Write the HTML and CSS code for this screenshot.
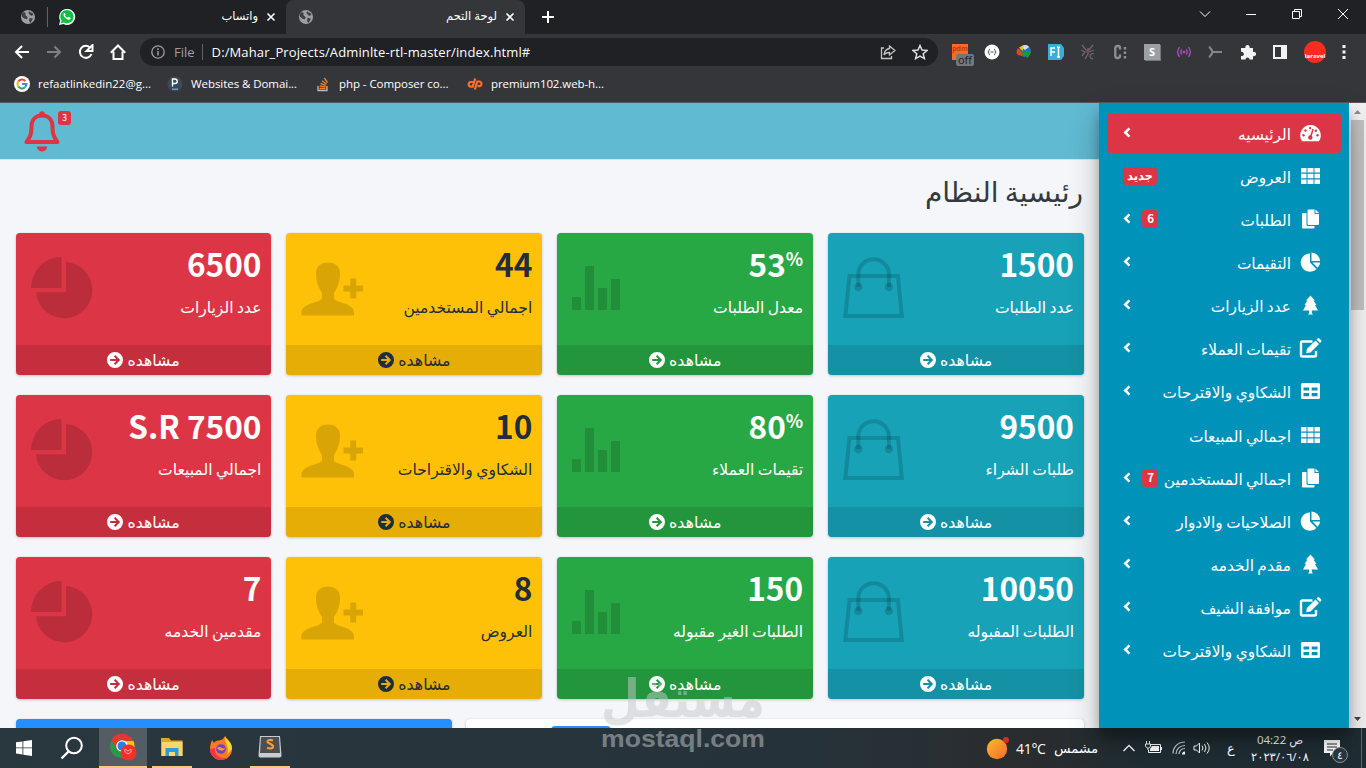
FILE: index.html
```
<!DOCTYPE html>
<html lang="ar" dir="rtl">
<head>
  <meta charset="UTF-8" />
  <meta name="viewport" content="width=device-width, initial-scale=1.0" />
  <title>لوحة التحم</title>
  <link rel="stylesheet" href="styles.css">
</head>
<body>
  <!-- Shared icons -->
  <svg class="defs" width="0" height="0">
    <symbol id="globe" viewBox="0 0 16 16"><circle cx="8" cy="8" r="7" fill="#9aa0a6"/><path d="M3 3.500c2-.5 3 .5 2.500 2S8 7 7.500 9 5 10 3.500 9 1 6 3 3.500zM9 2c1 2 3 1 4.500 3L12 7 10 6 8.500 4zM9.500 9l3.500 0.500-2.500 4.500-1.500-2z" fill="#3c4043"/></symbol>
    <symbol id="x" viewBox="0 0 10 10"><path d="M1.500 1.500l7 7M8.500 1.500l-7 7" stroke="#fff" stroke-width="1.600"/></symbol>
    <symbol id="arrow" viewBox="0 0 16 16"><path fill-rule="evenodd" d="M8 0a8 8 0 1 0 0 16A8 8 0 0 0 8 0zM6.900 4.500l1.400-1.400L13.200 8l-4.900 4.900-1.400-1.400L9.300 9H3.200V7h6.100z" fill="currentColor"/></symbol>
    <symbol id="chev" viewBox="0 0 8 11"><path d="M6.500 1.300L2.200 5.500l4.300 4.200" fill="none" stroke="#fff" stroke-width="2.500"/></symbol>
    <symbol id="bag" viewBox="0 0 62 62"><path d="M6.500 19h48.500l3.800 40H2.300z" fill="none" stroke="currentColor" stroke-width="4"/><path d="M15.300 30V17.500a15.300 15.300 0 0 1 30.600 0V30" fill="none" stroke="currentColor" stroke-width="4"/><circle cx="15.300" cy="30" r="4.200" fill="currentColor"/><circle cx="45.900" cy="30" r="4.200" fill="currentColor"/></symbol>
    <symbol id="bars" viewBox="0 0 62 62"><path d="M0 40h9v13H0zM13 9h9v44h-9zM26 31h9v22h-9zM39 22h9v31h-9z" fill="currentColor"/></symbol>
    <symbol id="person" viewBox="0 0 62 62"><path d="M27 5.500c7.500 0 12 4 12 11 0 8.500-2.500 14.500-6 19.500V41c0 4.500 20 5 20 14v3.500H.500V55c0-9 20.500-9.500 20.500-14v-5c-3.500-5-6-11-6-19.500 0-7 4.500-11 12-11zM49.200 21.500h6V28.500H62v6h-6.800v7h-6v-7h-6.700v-6h6.700z" fill="currentColor"/></symbol>
    <symbol id="pie" viewBox="0 0 62 62"><path d="M30.500 0v31H0A30.500 31 0 0 1 30.500 0zM35 5a28.200 28.200 0 1 1-30 30.300h30z" fill="currentColor"/></symbol>
    <symbol id="i-dash" viewBox="0 0 22 18"><path d="M11 1A10.300 10.300 0 0 0 2.600 17.200h16.800A10.300 10.300 0 0 0 11 1z" fill="#fff"/><path d="M10.800 14L13.600 5" stroke="#dc3545" stroke-width="1.500"/><g fill="#dc3545"><circle cx="10.800" cy="13.500" r="2.200"/><circle cx="4" cy="11.300" r="1.200"/><circle cx="6" cy="6.500" r="1.200"/><circle cx="10.600" cy="4.200" r="1.100"/><circle cx="16.300" cy="6.800" r="1.200"/><circle cx="18" cy="11.300" r="1.200"/></g></symbol>
    <symbol id="i-grid" viewBox="0 0 20 18"><path d="M.500 1h5.500v4.600H.500zM7 1h6v4.600H7zM14 1h5.500v4.600H14zM.500 6.700h5.500v4.600H.500zM7 6.700h6v4.600H7zM14 6.700h5.500v4.600H14zM.500 12.400h5.500V17H.500zM7 12.400h6V17H7zM14 12.400h5.500V17H14z" fill="#fff"/></symbol>
    <symbol id="i-copy" viewBox="0 0 18 20"><path d="M7 .5h6V5h4.500v10a1 1 0 0 1-1 1H7a1 1 0 0 1-1-1V1.500a1 1 0 0 1 1-1zM14 .5L17.500 4H14zM1.500 4H5v11.500A1.500 1.500 0 0 0 6.500 17H13v1.500a1 1 0 0 1-1 1H1.500a1 1 0 0 1-1-1V5a1 1 0 0 1 1-1z" fill="#fff"/></symbol>
    <symbol id="i-pie" viewBox="0 0 20 20"><path d="M9.500 1.500V10.500l6.400 6.400A9.100 9.100 0 1 1 9.500 1.500zM11 .5a9 9 0 0 1 8.500 8.500H11zM12 10.500h7.700a9 9 0 0 1-2.600 5.200z" fill="#fff"/></symbol>
    <symbol id="i-tree" viewBox="0 0 16 20"><path d="M8 .5L12.500 5.500H11L14 10h-1.500l3 5.500H9.300V18l1.200 1.500h-5L6.700 18v-2.500H.5l3-5.500H2l3-4.500H3.500z" fill="#fff"/></symbol>
    <symbol id="i-edit" viewBox="0 0 22 20"><path d="M13 3.500H3A1.500 1.500 0 0 0 1.500 5v12A1.500 1.500 0 0 0 3 18.500h12a1.500 1.500 0 0 0 1.500-1.500v-4" fill="none" stroke="#fff" stroke-width="2.400"/><path d="M16 2.500l3.500 3.500L11 14.500l-4.300.7.700-4.200zM17 1.500l1-1a1.300 1.300 0 0 1 1.800 0L21.500 2.200a1.300 1.300 0 0 1 0 1.800l-1 1z" fill="#fff"/></symbol>
    <symbol id="i-table" viewBox="0 0 20 18"><path fill-rule="evenodd" d="M2 1h16a1.500 1.500 0 0 1 1.500 1.500v13A1.500 1.500 0 0 1 18 17H2a1.500 1.500 0 0 1-1.500-1.500v-13A1.500 1.500 0 0 1 2 1zM3 5.500v3h5.700v-3zM11.200 5.500v3H17v-3zM3 11v3.300h5.700V11zM11.200 11v3.300H17V11z" fill="#fff"/></symbol>
  </svg>

  <!-- Browser window -->
  <header class="browser" dir="ltr">
    <div class="tabs">
      <div class="tab pinned"><svg width="16" height="16"><use href="#globe"/></svg></div>
      <div class="tab">
        <svg width="18" height="18" viewBox="0 0 18 18"><path d="M1 17l1.200-4.200A8 8 0 1 1 5.500 16z" fill="#fff"/><path d="M2.600 15.400l.9-2.800A6.700 6.700 0 1 1 5.800 14.600z" fill="#12c143"/><path d="M6.300 5c-1.600 1.200-.4 3.600 1.200 5s3.700 2.500 5 .8l-.2-1.200-1.900-.8-.9 1c-1.200-.4-2-1.300-2.500-2.300l.6-.9L6.900 5z" fill="#fff"/></svg>
        <span class="tab-title">واتساب</span>
        <svg width="10" height="10"><use href="#x"/></svg>
      </div>
      <div class="tab active">
        <svg width="16" height="16"><use href="#globe"/></svg>
        <span class="tab-title">لوحة التحم</span>
        <svg width="10" height="10"><use href="#x"/></svg>
      </div>
      <svg class="new-tab" width="12" height="12" viewBox="0 0 12 12"><path d="M6 0v12M0 6h12" stroke="#fff" stroke-width="2"/></svg>
      <div class="window-buttons">
        <svg width="12" height="12" viewBox="0 0 12 12"><path d="M1 3.500l5 5 5-5"/></svg>
        <svg width="12" height="12" viewBox="0 0 12 12"><path d="M1 6.500h10"/></svg>
        <svg width="12" height="12" viewBox="0 0 12 12"><path d="M1.500 3.500h7v7h-7zM3.500 3.500v-2h7v7h-2"/></svg>
        <svg width="12" height="12" viewBox="0 0 12 12"><path d="M1 1l10 10M11 1L1 11"/></svg>
      </div>
    </div>

    <div class="toolbar">
      <div class="nav-buttons">
        <svg width="16" height="16" viewBox="0 0 16 16"><path d="M15 8H2M8 2L2 8l6 6"/></svg>
        <svg class="dim" width="16" height="16" viewBox="0 0 16 16"><path d="M1 8h13M8.500 2.500L14 8l-5.500 5.500"/></svg>
        <svg width="16" height="16" viewBox="0 0 16 16"><path d="M13.500 10A6 6 0 1 1 12.500 4"/><path d="M14.500 1v6h-6z" fill="#fff" stroke="none"/></svg>
        <svg width="16" height="16" viewBox="0 0 16 16"><path d="M.800 8.700L8 1.500l7.200 7.200M3.500 7.500V15h9V7.500"/></svg>
      </div>
      <div class="address">
        <svg width="14" height="14" viewBox="0 0 14 14"><circle cx="7" cy="7" r="6.200" fill="none" stroke="#9aa0a6" stroke-width="1.300"/><path d="M7 6v4.500M7 3.300V5" stroke="#9aa0a6" stroke-width="1.500"/></svg>
        <span class="scheme">File</span>
        <span class="url">D:/Mahar_Projects/Adminlte-rtl-master/index.html#</span>
        <svg width="16" height="16" viewBox="0 0 16 16"><path d="M4 4H1.500v10.500h10V12M9.500 2l5.500 4.500L9.500 11V8.500C7 8.500 5 9.500 4 11c.3-3.500 2.500-6 5.500-6.500z" fill="none" stroke="#c4c7c5" stroke-width="1.300"/></svg>
        <svg width="16" height="16" viewBox="0 0 16 16"><path d="M8 1.500l2 4.600 5 .4-3.800 3.200 1.200 4.900L8 12l-4.400 2.600 1.200-4.900L1 6.500l5-.4z" fill="none" stroke="#dadce0" stroke-width="1.500"/></svg>
      </div>
      <div class="extensions">
        <span class="ext ext-pdf">pdm<b>off</b></span>
        <svg width="16" height="16" viewBox="0 0 16 16"><circle cx="8" cy="8" r="7.500" fill="#fff"/><path d="M6 5C4.500 5 5.500 8 3.800 8 5.500 8 4.500 11 6 11M10 5c1.500 0 .5 3 2.200 3-1.700 0-.7 3-2.200 3M6.500 8h3" fill="none" stroke="#444"/></svg>
        <svg width="16" height="16" viewBox="0 0 16 16"><circle cx="9" cy="7" r="6" fill="#276fc0"/><path d="M5 3c3-3 7-2 8 0L9 6z" fill="#d8dfe4"/><path d="M3 3.500L8 1 6.500 7z" fill="#e8c81c"/><path d="M2 4c-4 6 1 9 6 7L4.500 7z" fill="#d84828"/><path d="M6 8l4-1 5 1-3.500 6.500L10 12l-3 0z" fill="#159b3d"/></svg>
        <svg width="16" height="16" viewBox="0 0 16 16"><path d="M0 0h13l3 4v8l-3 4H0z" fill="#3baed8"/><path d="M3 12V4h4M3 8h4M9 3c1 0 1.500.500 1.500 1.500v7c0 1-.5 1.500-1.500 1.500M12 3c-1 0-1.500.500-1.500 1.500v7c0 1 .5 1.500 1.500 1.500" fill="none" stroke="#fff" stroke-width="1.400"/></svg>
        <svg width="16" height="16" viewBox="0 0 16 16"><path d="M2 1l4 5M13 1L9 6M1 6l4 2-3 4M14 6L9 8M8 4v6l-3 5M14 10c-4-2-6 4-1 5" fill="none" stroke="#67696d" stroke-width="1.300"/><circle cx="7.500" cy="7" r="1.500" fill="#a04040"/></svg>
        <svg width="16" height="16" viewBox="0 0 16 16"><path d="M8 5.500V3.700A1.800 1.800 0 0 0 6.200 2H5.500a2.200 2.200 0 0 0-2.200 2.200v7.600A2.200 2.200 0 0 0 5.500 14h.7A1.800 1.800 0 0 0 8 12.300V10.500" fill="none" stroke="#8b8f94" stroke-width="2.300"/><path d="M13 3v12" stroke="#8b8f94" stroke-width="2.500" stroke-dasharray="2.500 2"/></svg>
        <span class="ext ext-s">S</span>
        <svg width="16" height="16" viewBox="0 0 16 16"><path d="M3.500 3Q0 8 3.500 13M12.500 3Q16 8 12.500 13M5.800 5.500Q4 8 5.800 10.500M10.200 5.500Q12 8 10.200 10.500" fill="none" stroke="#b34fc5" stroke-width="1.300"/><circle cx="8" cy="8" r="1.200" fill="#e040c0"/></svg>
        <svg width="16" height="16" viewBox="0 0 16 16"><path d="M1.500 2.500C2 5 4 5 4.500 8 4 11 2 11 1.500 13.500M4.500 8H14" fill="none" stroke="#80868b" stroke-width="2.200"/></svg>
        <svg width="16" height="16" viewBox="0 0 16 16"><path d="M1 4h4.500a2.200 2.200 0 1 1 4 0H13v4a2.200 2.200 0 1 1 0 4v3.500H9.500a2 2 0 1 0-4 0H1V12a2.200 2.200 0 1 0 0-4.200z" fill="#f1f3f4"/></svg>
        <svg width="16" height="16" viewBox="0 0 16 16"><path fill-rule="evenodd" d="M1 1h14v14H1zM3 3v10h6V3z" fill="#f1f3f4"/></svg>
        <span class="avatar">laravel</span>
        <svg width="4" height="16" viewBox="0 0 4 16"><path d="M.500 1h3v3h-3zM.500 6.500h3v3h-3zM.500 12h3v3h-3z" fill="#f1f3f4"/></svg>
      </div>
    </div>

    <div class="bookmarks">
      <a class="bm"><svg width="16" height="16" viewBox="0 0 16 16"><circle cx="8" cy="8" r="8" fill="#fff"/><g fill="none" stroke-width="2"><path d="M4.300 5.500A4.500 4.500 0 0 1 11.300 5" stroke="#ea4335"/><path d="M4.300 5.500a4.500 4.500 0 0 0 0 5" stroke="#fbbc05"/><path d="M4.300 10.500a4.500 4.500 0 0 0 6.500 1" stroke="#34a853"/><path d="M10.800 11.500A4.500 4.500 0 0 0 12.500 8H8" stroke="#4285f4"/></g></svg><span>refaatlinkedin22@g...</span></a>
      <a class="bm"><svg width="16" height="16" viewBox="0 0 16 16"><circle cx="8" cy="8" r="7.500" fill="#3a4a58"/><path d="M5.500 10.500V3H8a2.200 2.200 0 0 1 0 4.500H5.500" fill="none" stroke="#fff" stroke-width="1.400"/><path d="M5 13.200h6" stroke="#5ab4e8" stroke-width="1.300"/></svg><span>Websites &amp; Domai...</span></a>
      <a class="bm"><svg width="16" height="16" viewBox="0 0 16 16"><path d="M3 10v4.500h9V10" fill="none" stroke="#bcbbbb" stroke-width="1.300"/><path d="M4.500 12.500h6M4.700 10l5.900.8M5.500 7.300l5.400 2M7 4.700l4.500 3.300M9.300 2l3.200 4.500" stroke="#f48024" stroke-width="1.300"/></svg><span>php - Composer co...</span></a>
      <a class="bm"><svg width="16" height="16" viewBox="0 0 16 16"><path d="M6.500 6H4a2.300 2.300 0 0 0 0 4.600h1.700L8.200 2.500M7.800 13.500L10.300 5.500h1.900a2.300 2.300 0 0 1 0 4.600H10.500" fill="none" stroke="#ff6c2c" stroke-width="2.200"/></svg><span>premium102.web-h...</span></a>
    </div>
  </header>

  <!-- Dashboard -->
  <div class="wrapper">
    <aside class="sidebar">
      <ul class="nav">
        <li class="active"><svg class="ico" height="18"><use href="#i-dash"/></svg><p>الرئيسيه</p><svg class="chev" width="8" height="11"><use href="#chev"/></svg></li>
        <li><svg class="ico" height="18"><use href="#i-grid"/></svg><p>العروض</p><span class="badge">جديد</span></li>
        <li><svg class="ico" height="20"><use href="#i-copy"/></svg><p>الطلبات</p><span class="badge">6</span><svg class="chev" width="8" height="11"><use href="#chev"/></svg></li>
        <li><svg class="ico" height="20"><use href="#i-pie"/></svg><p>التقيمات</p><svg class="chev" width="8" height="11"><use href="#chev"/></svg></li>
        <li><svg class="ico" height="20"><use href="#i-tree"/></svg><p>عدد الزيارات</p><svg class="chev" width="8" height="11"><use href="#chev"/></svg></li>
        <li><svg class="ico" height="20"><use href="#i-edit"/></svg><p>تقيمات العملاء</p><svg class="chev" width="8" height="11"><use href="#chev"/></svg></li>
        <li><svg class="ico" height="18"><use href="#i-table"/></svg><p>الشكاوي والاقترحات</p><svg class="chev" width="8" height="11"><use href="#chev"/></svg></li>
        <li><svg class="ico" height="18"><use href="#i-grid"/></svg><p>اجمالي المبيعات</p></li>
        <li><svg class="ico" height="20"><use href="#i-copy"/></svg><p>اجمالي المستخدمين</p><span class="badge">7</span><svg class="chev" width="8" height="11"><use href="#chev"/></svg></li>
        <li><svg class="ico" height="20"><use href="#i-pie"/></svg><p>الصلاحيات والادوار</p><svg class="chev" width="8" height="11"><use href="#chev"/></svg></li>
        <li><svg class="ico" height="20"><use href="#i-tree"/></svg><p>مقدم الخدمه</p><svg class="chev" width="8" height="11"><use href="#chev"/></svg></li>
        <li><svg class="ico" height="20"><use href="#i-edit"/></svg><p>موافقة الشيف</p><svg class="chev" width="8" height="11"><use href="#chev"/></svg></li>
        <li><svg class="ico" height="18"><use href="#i-table"/></svg><p>الشكاوي والاقترحات</p><svg class="chev" width="8" height="11"><use href="#chev"/></svg></li>
      </ul>
    </aside>

    <main class="content">
      <nav class="topbar">
        <div class="bell">
          <svg width="36" height="41" viewBox="0 0 36 41"><path d="M18 4.500c-7 0-10.500 5-10.500 11 0 9-2 11-5 15.500h31c-3-4.500-5-6.500-5-15.500 0-6-3.500-11-10.500-11z" fill="none" stroke="#dc3545" stroke-width="4" stroke-linejoin="round"/><circle cx="18" cy="3" r="2.800" fill="#dc3545"/><path d="M12.800 35.500h10.400a5.200 5 0 0 1-10.400 0z" fill="#dc3545"/></svg>
          <span class="count">3</span>
        </div>
      </nav>
      <h1>رئيسية النظام</h1>
      <div class="boxes">
        <div class="box info"><div class="inner"><div><h3>1500</h3><p>عدد الطلبات</p></div><svg width="62" height="62"><use href="#bag"/></svg></div><a class="more"><span>مشاهده</span> <svg width="16" height="16"><use href="#arrow"/></svg></a></div>
        <div class="box success"><div class="inner"><div><h3 dir="ltr">53<sup>%</sup></h3><p>معدل الطلبات</p></div><svg width="62" height="62"><use href="#bars"/></svg></div><a class="more"><span>مشاهده</span> <svg width="16" height="16"><use href="#arrow"/></svg></a></div>
        <div class="box warning"><div class="inner"><div><h3>44</h3><p>اجمالي المستخدمين</p></div><svg width="62" height="62"><use href="#person"/></svg></div><a class="more"><span>مشاهده</span> <svg width="16" height="16"><use href="#arrow"/></svg></a></div>
        <div class="box danger"><div class="inner"><div><h3>6500</h3><p>عدد الزيارات</p></div><svg width="62" height="62"><use href="#pie"/></svg></div><a class="more"><span>مشاهده</span> <svg width="16" height="16"><use href="#arrow"/></svg></a></div>

        <div class="box info"><div class="inner"><div><h3>9500</h3><p>طلبات الشراء</p></div><svg width="62" height="62"><use href="#bag"/></svg></div><a class="more"><span>مشاهده</span> <svg width="16" height="16"><use href="#arrow"/></svg></a></div>
        <div class="box success"><div class="inner"><div><h3 dir="ltr">80<sup>%</sup></h3><p>تقيمات العملاء</p></div><svg width="62" height="62"><use href="#bars"/></svg></div><a class="more"><span>مشاهده</span> <svg width="16" height="16"><use href="#arrow"/></svg></a></div>
        <div class="box warning"><div class="inner"><div><h3>10</h3><p>الشكاوي والاقتراحات</p></div><svg width="62" height="62"><use href="#person"/></svg></div><a class="more"><span>مشاهده</span> <svg width="16" height="16"><use href="#arrow"/></svg></a></div>
        <div class="box danger"><div class="inner"><div><h3 dir="ltr">S.R 7500</h3><p>اجمالي المبيعات</p></div><svg width="62" height="62"><use href="#pie"/></svg></div><a class="more"><span>مشاهده</span> <svg width="16" height="16"><use href="#arrow"/></svg></a></div>

        <div class="box info"><div class="inner"><div><h3>10050</h3><p>الطلبات المفبوله</p></div><svg width="62" height="62"><use href="#bag"/></svg></div><a class="more"><span>مشاهده</span> <svg width="16" height="16"><use href="#arrow"/></svg></a></div>
        <div class="box success"><div class="inner"><div><h3>150</h3><p>الطلبات الغير مقبوله</p></div><svg width="62" height="62"><use href="#bars"/></svg></div><a class="more"><span>مشاهده</span> <svg width="16" height="16"><use href="#arrow"/></svg></a></div>
        <div class="box warning"><div class="inner"><div><h3>8</h3><p>العروض</p></div><svg width="62" height="62"><use href="#person"/></svg></div><a class="more"><span>مشاهده</span> <svg width="16" height="16"><use href="#arrow"/></svg></a></div>
        <div class="box danger"><div class="inner"><div><h3>7</h3><p>مقدمين الخدمه</p></div><svg width="62" height="62"><use href="#pie"/></svg></div><a class="more"><span>مشاهده</span> <svg width="16" height="16"><use href="#arrow"/></svg></a></div>
      </div>
      <div class="panels">
        <div class="panel chart"><span class="pill"></span></div>
        <div class="panel map"></div>
      </div>
    </main>

    <div class="scrollbar">
      <svg width="17" height="17" viewBox="0 0 17 17"><path d="M5 11l3.500-4L12 11z" fill="#8a8d91"/></svg>
      <span class="thumb"></span>
      <svg width="17" height="17" viewBox="0 0 17 17"><path d="M5 6l3.500 4L12 6z" fill="#404346"/></svg>
    </div>
  </div>

  <!-- Windows taskbar -->
  <footer class="taskbar" dir="ltr">
    <div class="app"><svg width="16" height="16" viewBox="0 0 16 16"><path d="M0 2.300l6.500-.9v6.100H0zM7.300 1.300L16 0v7.500H7.300zM0 8.300h6.500v6.200L0 13.600zM7.300 8.300H16V16l-8.700-1.300z" fill="#fff"/></svg></div>
    <div class="app"><svg width="24" height="24" viewBox="0 0 24 24"><circle cx="14" cy="9.500" r="7.800" fill="none" stroke="#fff" stroke-width="2"/><path d="M8.500 15.500L1.500 22.500" stroke="#fff" stroke-width="2.400"/></svg></div>
    <div class="app open current"><svg width="28" height="28" viewBox="0 0 28 28"><circle cx="13" cy="13" r="12" fill="#2b9a48"/><path d="M2.500 7A12 12 0 0 1 24 8H13l-5.500 8z" fill="#de3a30"/><path d="M24.500 8A12 12 0 0 1 13 25l5-10-2-7z" fill="#f8c21c"/><circle cx="13" cy="13" r="5.800" fill="#fff"/><circle cx="13" cy="13" r="4.500" fill="#2482ea"/><circle cx="19.500" cy="19.500" r="8" fill="#f5302a"/><path d="M16 16l3 2 3-2v3l-3 2-3-2z" fill="none" stroke="#ffa79f"/></svg></div>
    <div class="app open"><svg width="22" height="20" viewBox="0 0 22 20"><path d="M0 1h8l2 2.500h11.500V19H0z" fill="#e0a826"/><path d="M1 5h20.500v14H1z" fill="#fbd767"/><path d="M4.500 11h13v8h-3.500v-4H8v4H4.500z" fill="#2a9bdd"/></svg></div>
    <div class="app"><svg width="24" height="24" viewBox="0 0 24 24"><path d="M12 4c3-1 3-3 4-4 1 3 7 5 7 13a11 11 0 0 1-22 0c0-4 1-6 2-9l2 3c2-3 4-2 7-3z" fill="#ff7a1c"/><path d="M16 0c1 4 7 5 7 13l-5 6c3-8-3-12-2-19z" fill="#ffd52e"/><path d="M1 13a11 11 0 0 0 17 9c-8 1-13-4-12-10z" fill="#f2344c"/><circle cx="12" cy="13" r="4.800" fill="#7142d0"/><path d="M8 12c3-3 6 2 8 0-1 4-6 3-8 0z" fill="#ff9a2e"/></svg></div>
    <div class="app open"><svg width="24" height="22" viewBox="0 0 24 22"><path d="M2 0h20l1.500 19.500A2 2 0 0 1 22 21.500H2A2 2 0 0 1 .500 19.500z" fill="#c9ccce"/><path d="M3 1h18l1 16H2z" fill="#4c4f51"/><path d="M15 4.500c-2.500-1-5.500-.8-5.500 1.200S15 7.800 15 10.300s-3 2.700-6 1.500" fill="none" stroke="#f79a3a" stroke-width="2.200"/></svg></div>
    <div class="tray">
      <svg width="24" height="24" viewBox="0 0 24 24"><defs><linearGradient id="sun" x1="0" y1="0" x2="1" y2="1"><stop offset="0" stop-color="#fbbc2c"/><stop offset="1" stop-color="#f4692c"/></linearGradient></defs><circle cx="11" cy="13" r="10.200" fill="url(#sun)"/><circle cx="20" cy="4" r="3" fill="#d3301f"/></svg>
      <span class="temp">41°C</span>
      <span class="weather">مشمس</span>
      <svg class="up" width="14" height="10" viewBox="0 0 14 10"><path d="M1.500 8L7 2.500 12.500 8" fill="none" stroke="#fff" stroke-width="1.300"/></svg>
      <svg class="bat" width="18" height="14" viewBox="0 0 18 14"><path d="M5.500 3.500h10v8H3.500V9M16.500 6v3M1.500 0v3M4.500 0v3M.500 3h5v2.500L3.500 7h-1L.500 5.500zM3 7v2" fill="none" stroke="#fff"/><path d="M7 5h7v5H5V8z" fill="#fff"/></svg>
      <svg class="wifi" width="14" height="14" viewBox="0 0 14 14"><g fill="none" stroke="#c9cdd0" stroke-width="1.200"><path d="M1 12.500C1 6 6 1 13 1"/><path d="M4 13C4 8 8 4.500 13 4.500"/><path d="M7 13c0-3 2.500-5.500 6-5.500"/></g><path d="M10 13.500a3 3 0 0 1 3-3v3z" fill="#fff"/></svg>
      <svg class="vol" width="18" height="14" viewBox="0 0 18 14"><path d="M1 5h2.500L6.500 2v10L3.500 9H1zM9 4.500q2 2.500 0 5M11.500 3q3 4 0 8M14 1.500q4.500 5.500 0 11" fill="none" stroke="#fff"/></svg>
      <span class="lang">ع</span>
      <div class="clock"><div dir="rtl">ص 04:22</div><div>٢٠٢٣/٠٦/٠٨</div></div>
      <div class="notes"><svg width="17" height="17" viewBox="0 0 17 17"><path d="M0 0h16v13H9l-3 3.500V13H0z" fill="#fff"/><path d="M3 4h10M3 7h10M3 10h6" stroke="#1f2c32"/></svg><span>٤</span></div>
    </div>
  </footer>

  <!-- Watermark -->
  <svg class="watermark" width="168" height="80" viewBox="0 0 168 80">
    <text class="wm-ar" x="84" y="43" text-anchor="middle" textLength="164" lengthAdjust="spacingAndGlyphs">مستقل</text>
    <text class="wm-en" x="2" y="73" textLength="164" lengthAdjust="spacingAndGlyphs" direction="ltr">mostaql.com</text>
  </svg>
</body>
</html>
```
FILE: styles.css
```
* {
  box-sizing: border-box;
}
body {
  font-family: "Noto Sans CJK SC", "DejaVu Sans", sans-serif;
  margin: 0;
  width: 1366px;
  height: 768px;
  overflow: hidden;
  display: flex;
  flex-direction: column;
  background: #f4f6f9;
}
h1, h3, p, ul {
  margin: 0;
  padding: 0;
  font-weight: normal;
}
svg {
  flex: none;
}
.defs {
  position: absolute;
}

/* Browser window */
.browser {
  height: 103px;
  flex: none;
  background: #35363a;
  border-bottom: 1px solid #55595c;
  color: #fff;
  font-family: "Open Sans", "DejaVu Sans", sans-serif;
  font-size: 12px;
}
.tabs {
  height: 34px;
  background: #202124;
  display: flex;
  align-items: center;
}
.tab {
  height: 34px;
  width: 238px;
  display: flex;
  align-items: center;
  padding: 0 10px;
}
.tab.pinned {
  width: 48px;
  padding-left: 20px;
  background: linear-gradient(#5f6368, #5f6368) right center / 1px 20px no-repeat;
}
.tab.active {
  width: 239px;
  background: #35363a;
  border-radius: 8px 8px 0 0;
  padding-left: 12px;
}
.tab-title {
  flex: 1;
  text-align: right;
  direction: rtl;
  margin-right: 8px;
  padding-bottom: 3px;
  font-size: 11.500px;
}
.new-tab {
  margin-left: 17px;
}
.window-buttons {
  margin-left: auto;
  display: flex;
  gap: 34px;
  padding: 0 17px 6px 0;
}
.window-buttons path {
  fill: none;
  stroke: #fff;
}
.toolbar {
  height: 36px;
  display: flex;
  align-items: center;
}
.nav-buttons {
  display: flex;
  gap: 16px;
  padding: 0 14px;
}
.nav-buttons path {
  fill: none;
  stroke: #fff;
  stroke-width: 2;
}
.nav-buttons .dim path {
  stroke: #7d8084;
}
.address {
  width: 798px;
  height: 28px;
  border-radius: 14px;
  background: #202124;
  display: flex;
  align-items: center;
  padding: 0 10px 0 11px;
  font-size: 13px;
}
.address svg + svg {
  margin-left: 16px;
}
.scheme {
  color: #9aa0a6;
  margin-left: 9px;
  padding-right: 7px;
  border-right: 1px solid #5f6368;
  line-height: 16px;
}
.url {
  flex: 1;
  margin-left: 9px;
  letter-spacing: 0.120px;
}
.extensions {
  display: flex;
  align-items: center;
  justify-content: space-between;
  flex: 1;
  padding: 0 20px 0 14px;
}
.ext {
  width: 16px;
  height: 16px;
  font-size: 11px;
  line-height: 15px;
  text-align: center;
  color: #fff;
}
.ext-pdf {
  position: relative;
  background: #fb6a25;
  color: #c33a05;
  font-size: 7px;
  font-weight: bold;
  line-height: 9px;
}
.ext-pdf b {
  position: absolute;
  left: 4px;
  top: 10px;
  width: 18px;
  height: 12px;
  border-radius: 2px;
  background: #73777a;
  color: #202124;
  font-size: 11px;
  font-weight: normal;
  line-height: 11px;
}
.ext-s {
  background: #9b9fa3;
  font-weight: bold;
  box-shadow: 1px 1px 0 #74787b;
}
.avatar {
  width: 22px;
  height: 22px;
  border-radius: 50%;
  background: #f92c20;
  font-size: 6px;
  font-weight: bold;
  line-height: 30px;
  text-align: center;
}
.bookmarks {
  height: 28px;
  display: flex;
  padding-left: 14px;
  font-size: 11.500px;
}
.bm {
  width: 153px;
  display: flex;
  align-items: center;
  gap: 8px;
  white-space: nowrap;
}
.bm span {
  padding-bottom: 2px;
}
.bm:nth-child(2), .bm:nth-child(3) {
  letter-spacing: -0.060px;
}
.bm:nth-child(4) {
  letter-spacing: -0.080px;
}
.bm:nth-child(2) {
  width: 148px;
}
.bm:nth-child(3) {
  width: 152px;
}

/* Dashboard layout */
.wrapper {
  height: 625px;
  display: flex;
  direction: ltr;
}
.sidebar {
  order: 2;
  width: 250px;
  direction: rtl;
  background: #0092b9;
  padding: 10px 8px;
  z-index: 1;
  box-shadow: 0 14px 28px rgba(0,0,0,.25), 0 10px 10px rgba(0,0,0,.22);
}
.nav {
  list-style: none;
}
.nav li {
  height: 40px;
  margin-bottom: 3.170px;
  padding: 0 16px;
  border-radius: 4px;
  display: flex;
  align-items: center;
  color: #fff;
}
.nav li.active {
  background: #dc3545;
}
.nav .ico {
  width: 29px;
  margin-bottom: 1px;
}
.nav p {
  flex: 1;
  margin-right: 5px;
  padding-bottom: 1px;
  font-size: 15.400px;
  white-space: nowrap;
}
.badge {
  min-width: 16px;
  height: 18px;
  padding: 0 4px;
  border-radius: 4px;
  background: #dc3545;
  font-size: 11.500px;
  font-weight: bold;
  line-height: 17px;
}
.chev {
  margin: 0 11px 2px 0;
}
.content {
  order: 1;
  width: 1099px;
  direction: rtl;
  overflow: hidden;
}
.topbar {
  height: 57px;
  background: #5fbad2;
  border-bottom: 1px solid #dee2e6;
}
.bell {
  position: relative;
  width: 36px;
  margin-right: auto;
  margin-left: 24px;
  padding-top: 8px;
}
.count {
  position: absolute;
  left: 34px;
  top: 8px;
  width: 13px;
  height: 14px;
  border-radius: 3px;
  background: #dc3545;
  color: #fff;
  font-size: 9px;
  line-height: 13px;
  text-align: center;
}
.content h1 {
  height: 73px;
  padding: 0 16px;
  font-size: 28px;
  line-height: 61px;
  color: #343a40;
}
.boxes {
  display: grid;
  grid-template-columns: repeat(4, 1fr);
  gap: 20px 15px;
  padding: 0 15px 0 15.600px;
}
.box {
  height: 142px;
  border-radius: 4px;
  overflow: hidden;
  color: #fff;
  box-shadow: 0 0 1px rgba(0,0,0,.125), 0 1px 3px rgba(0,0,0,.2);
}
.info { background: #17a2b8; }
.success { background: #28a745; }
.warning { background: #ffc107; color: #1f2d3d; }
.danger { background: #dc3545; }
.inner {
  height: 112px;
  padding: 9px 10px 0 15px;
  display: flex;
  justify-content: space-between;
}
.inner svg {
  margin-top: 15px;
  color: rgba(0,0,0,.15);
}
.box h3 {
  font-size: 31.600px;
  font-weight: bold;
  line-height: 42px;
  height: 46px;
  text-align: right;
  white-space: nowrap;
}
.box sup {
  font-size: 18px;
  line-height: 0;
  vertical-align: 11px;
}
.box p {
  font-size: 15.600px;
  line-height: 36px;
  white-space: nowrap;
}
.more {
  height: 30px;
  background: rgba(0,0,0,.1);
  display: flex;
  align-items: center;
  justify-content: center;
  gap: 4px;
  font-size: 15.800px;
}
.more span {
  padding-bottom: 2px;
}
.panels {
  display: flex;
  gap: 14px;
  padding: 20px 15px 0 16px;
}
.panel {
  height: 60px;
  border-radius: 4px;
  box-shadow: 0 0 1px rgba(0,0,0,.125), 0 1px 3px rgba(0,0,0,.2);
}
.chart {
  width: 618px;
  background: #fff;
  padding: 7px 0 0 85px;
}
.pill {
  display: block;
  width: 60px;
  height: 38px;
  margin-right: auto;
  border-radius: 4px;
  background: #258fff;
}
.map {
  width: 436px;
  background: #258fff;
}
.scrollbar {
  order: 3;
  width: 17px;
  background: #f1f1f1;
  display: flex;
  flex-direction: column;
}
.thumb {
  height: 190px;
  margin: 0 2px auto;
  background: #c1c1c1;
}

/* Windows taskbar */
.taskbar {
  height: 40px;
  background: linear-gradient(90deg, #29373f, #263239 60%, #2a2c2e 75%, #1f2d33 84%);
  display: flex;
  color: #fff;
  font-family: "Open Sans", "DejaVu Sans", sans-serif;
}
.app {
  width: 48px;
  display: flex;
  align-items: center;
  justify-content: center;
}
.app:nth-child(2) {
  width: 51px;
  padding-right: 3px;
}
.app.open {
  border-bottom: 2px solid #f3c984;
  width: 40px;
  margin: 0 5px;
}
.app.current {
  width: 48px;
  margin: 0;
  background: #535d63;
}
.tray {
  margin-left: auto;
  display: flex;
  align-items: center;
  height: 40px;
  padding-right: 4px;
  border-right: 1px solid #5d676c;
  margin-right: 4px;
}
.temp {
  width: 32px;
  margin-left: 6px;
  font-size: 14px;
  letter-spacing: -0.300px;
}
.weather {
  width: 44px;
  margin-left: 6px;
  font-size: 13.500px;
}
.up { margin-left: 24px; }
.bat { margin-left: 9px; }
.wifi { margin-left: 9px; }
.vol { margin-left: 7px; }
.lang {
  width: 8px;
  margin-left: 16px;
  font-size: 13px;
}
.clock {
  width: 64px;
  margin-left: 13px;
  font-size: 11.500px;
  line-height: 17px;
  text-align: center;
  white-space: nowrap;
}
.notes {
  position: relative;
  width: 33px;
  height: 17px;
  margin-left: 12px;
}
.notes svg {
  display: block;
}
.notes span {
  position: absolute;
  left: 8px;
  top: 7px;
  width: 16px;
  height: 16px;
  border-radius: 50%;
  border: 1px solid #8b9296;
  background: #2b383e;
  font-size: 11px;
  line-height: 14px;
  text-align: center;
}

/* Watermark over everything */
.watermark {
  position: absolute;
  left: 599px;
  top: 674px;
  z-index: 5;
  overflow: visible;
  fill: #c6c9cb;
  opacity: .5;
}
.wm-ar {
  font: bold 53px "DejaVu Sans", sans-serif;
}
.wm-en {
  font: bold 24px "Liberation Sans", sans-serif;
}
```
